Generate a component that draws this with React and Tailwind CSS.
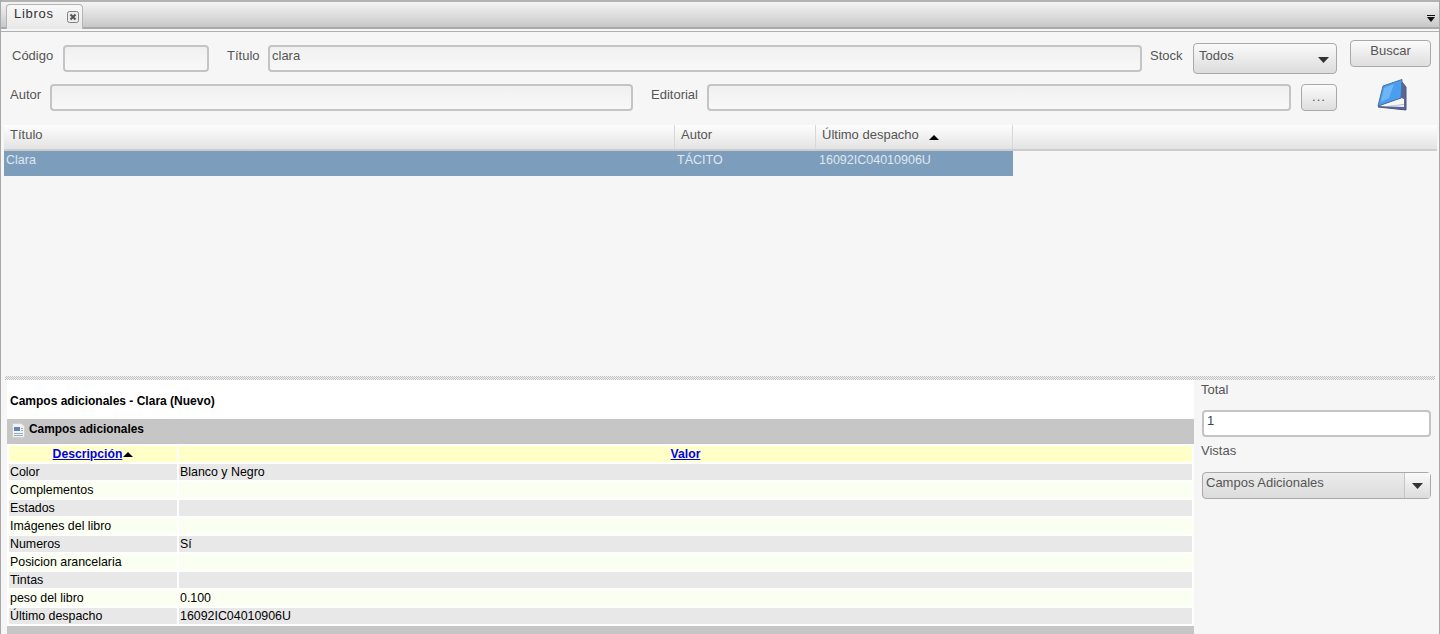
const inputClass =
  "h-[27px] rounded-[4px] border-2 border-[#c4c4c4] bg-gradient-to-b from-[#f0f0f0] to-[#f8f8f8] px-[2px] text-[13px] leading-[18px] text-[#555]";
const buttonClass =
  "rounded-[4px] border border-[#a9a9a9] bg-gradient-to-b from-[#fbfbfb] to-[#dedede] text-[13px] text-[#555]";

const rows = [
  ["Color", "Blanco y Negro"],
  ["Complementos", ""],
  ["Estados", ""],
  ["Imágenes del libro", ""],
  ["Numeros", "Sí"],
  ["Posicion arancelaria", ""],
  ["Tintas", ""],
  ["peso del libro", "0.100"],
  ["Último despacho", "16092IC04010906U"],
];

function Caret({ className }) {
  return (
    <svg width="11" height="6" viewBox="0 0 11 6" className={className}>
      <path d="M0 0h11L5.5 6z" fill="#333" />
    </svg>
  );
}

function SortUp({ className }) {
  return (
    <svg width="10" height="5" viewBox="0 0 10 5" className={className}>
      <path d="M0 5h10L5 0z" fill="#000" />
    </svg>
  );
}

function TabMenuIcon({ className }) {
  return (
    <svg width="8" height="7" viewBox="0 0 8 7" className={className}>
      <path d="M0 0h8v1H0zM0 2h8L4 7z" fill="#111" />
    </svg>
  );
}

function CloseIcon({ className }) {
  return (
    <svg width="12" height="12" viewBox="0 0 12 12" className={className}>
      <rect x=".5" y=".5" width="11" height="11" rx="2" fill="#ececec" stroke="#808080" />
      <path d="M3.5 3.5l5 5M8.5 3.5l-5 5" stroke="#555" strokeWidth="2" />
    </svg>
  );
}

function BookIcon() {
  return (
    <svg width="30" height="32" viewBox="0 0 30 32">
      <path d="M25 3l4 5v23L1 28z" fill="#5a6796" stroke="#4b5580" strokeWidth="1" />
      <path d="M2 27l22-8 3 1v8z" fill="#f6f6f6" />
      <path d="M3 28l24-3v1z" fill="#aab0c8" />
      <path d="M6 7L25 .5 24 19 1 27z" fill="#4a9ef0" stroke="#4e6f9e" strokeWidth="1" />
      <path d="M7 9l10-4-5 14-8 4z" fill="#6fb6f5" />
    </svg>
  );
}

function DocIcon() {
  return (
    <svg width="13" height="15" viewBox="0 0 13 15">
      <path d="M.5.5h9l3 3v11H.5z" fill="#f2f2f2" stroke="#cfcfcf" />
      <path d="M2 4h6v4H2z" fill="#5e86b5" />
      <path d="M2 10h9v1H2zM2 12h9v1H2zM9 5h2v1H9zM9 7h2v1H9z" fill="#9aa9bb" />
    </svg>
  );
}

export default function App() {
  return (
    <div className="flex h-[634px] w-[1440px] flex-col overflow-hidden border-x border-[#a8a8a8] bg-[#f6f6f6] font-['Liberation_Sans',Arial,sans-serif]">
      {/* tabs */}
      <div className="relative h-[32px] shrink-0 border-b border-[#b0b0b0]">
        <div className="flex h-[29px] items-end border-y-2 border-y-[#a9a9a9] border-t-[#b2b2b2] bg-gradient-to-b from-[#f4f4f4] to-[#c8c8c8] pl-[5px]">
          <div className="-mb-[2px] flex h-[25px] w-[77px] rounded-t-[4px] border border-b-0 border-[#b4b4b4] bg-gradient-to-b from-[#f8f8f8] to-[#e8e8e8] pl-[7px]">
            <span className="text-[13px] leading-[17px] tracking-[0.7px] text-[#333]">Libros</span>
            <CloseIcon className="ml-[13px] mt-[6px]" />
          </div>
          <TabMenuIcon className="absolute right-[4px] top-[15px]" />
        </div>
      </div>

      {/* filtros */}
      <div className="relative h-[93px] shrink-0">
        <div className="flex items-start pl-[11px] pt-[13px] text-[13px] text-[#555]">
          <span className="w-[51px] pt-[1px]">Código</span>
          <div className={`${inputClass} w-[146px]`} />
          <span className="ml-[18px] w-[41px] pt-[1px]">Título</span>
          <div className={`${inputClass} w-[874px]`}>clara</div>
          <span className="ml-[8px] w-[43px] pt-[1px]">Stock</span>
          <div className="flex h-[31px] w-[144px] -translate-y-[2px] items-start justify-between rounded-[4px] border border-[#a9a9a9] bg-gradient-to-b from-[#fafafa] to-[#dcdcdc] pl-[5px] pr-[7px] pt-[3px] leading-[18px]">
            Todos
            <Caret className="mt-[10px]" />
          </div>
          <button className={`${buttonClass} ml-[13px] h-[27px] w-[81px] -translate-y-[5px] pb-[5px]`}>Buscar</button>
        </div>
        <div className="mt-[8px] flex items-start pl-[9px] text-[13px] text-[#555]">
          <span className="w-[40px] pt-[1px]">Autor</span>
          <div className={`${inputClass} w-[583px]`} />
          <span className="ml-[18px] w-[56px] pt-[1px]">Editorial</span>
          <div className={`${inputClass} w-[584px]`} />
          <button className={`${buttonClass} ml-[10px] h-[27px] w-[36px] pb-[2px] text-[11px] tracking-[1px]`}>...</button>
          <div className="ml-[40px] -mt-[5px]">
            <BookIcon />
          </div>
        </div>
      </div>

      {/* grilla */}
      <div className="h-[251px] shrink-0 pl-[3px] pr-[2px] text-[13px]">
        <div className="flex h-[26px] border-b-2 border-[#cdcdcd] bg-gradient-to-b from-[#fdfdfd] to-[#e3e3e3] text-[#555]">
          <div className="w-[670px] pl-[6px]">Título</div>
          <div className="w-[141px] border-l border-[#d8d8d8] pl-[6px]">Autor</div>
          <div className="flex w-[198px] border-x border-[#d8d8d8] pl-[6px]">
            Último despacho
            <SortUp className="ml-[10px] mt-[10px]" />
          </div>
        </div>
        <div className="flex h-[25px] w-[1009px] bg-[#7d9dbc] text-[12.5px] text-[#dfe7ef]">
          <div className="w-[673px] pl-[2px]">Clara</div>
          <div className="w-[142px]">TÁCITO</div>
          <div>16092IC04010906U</div>
        </div>
      </div>

      {/* separador */}
      <div className="mx-[4px] h-[4px] shrink-0 bg-[repeating-conic-gradient(#c2c2c2_0_25%,#f0f0f0_0_50%)] bg-[length:2px_2px]" />

      {/* detalle */}
      <div className="flex min-h-0 flex-1">
        <div className="ml-[6px] w-[1187px] bg-white">
          <div className="h-[39px] pl-[3px] pt-[14px] text-[12px] font-bold leading-[14px] text-black">
            Campos adicionales - Clara (Nuevo)
          </div>
          <div className="flex h-[25px] items-center gap-[4px] bg-[#c6c6c6] pb-[3px] pl-[5px] text-[11.9px] font-bold text-black">
            <DocIcon />
            Campos adicionales
          </div>
          <div className="grid grid-cols-[168px_1013px] gap-[2px] pl-[2px] pt-[2px] text-[12.4px] leading-[16px] text-black">
            <div className="flex h-[16px] items-center justify-center bg-[#ffffc8] text-[12.2px] font-bold text-[#0000ee] underline">
              Descripción
              <SortUp className="ml-[1px]" />
            </div>
            <div className="flex h-[16px] items-center justify-center bg-[#ffffc8] text-[12.2px] font-bold text-[#0000ee] underline">
              Valor
            </div>
            {rows.map(([name, value], i) => (
              <div key={name} className="contents">
                <div className={`h-[16px] pl-[1px] ${i % 2 === 0 ? "bg-[#e8e8e8]" : "bg-[#fbfff2]"}`}>{name}</div>
                <div className={`h-[16px] pl-[1px] ${i % 2 === 0 ? "bg-[#e8e8e8]" : "bg-[#fbfff2]"}`}>{value}</div>
              </div>
            ))}
          </div>
          <div className="mt-[2px] h-[8px] bg-[#c6c6c6]" />
        </div>
        <div className="flex-1 pl-[7px] text-[13px] text-[#555]">
          <div className="h-[30px] leading-[20px]">Total</div>
          <div className="ml-[1px] h-[27px] w-[229px] rounded-[4px] border-2 border-[#c4c4c4] bg-white pl-[3px] leading-[18px] text-[#345]">
            1
          </div>
          <div className="mt-[4px] h-[31px] leading-[20px]">Vistas</div>
          <div className="ml-[1px] flex h-[27px] w-[229px] rounded-[4px] border border-[#a9a9a9] bg-gradient-to-b from-[#ececec] to-[#dcdcdc]">
            <span className="flex-1 pl-[3px] leading-[19px]">Campos Adicionales</span>
            <div className="flex w-[26px] items-center justify-center border-l border-[#c4c4c4] bg-gradient-to-b from-[#fafafa] to-[#dcdcdc]">
              <Caret />
            </div>
          </div>
        </div>
      </div>
    </div>
  );
}
